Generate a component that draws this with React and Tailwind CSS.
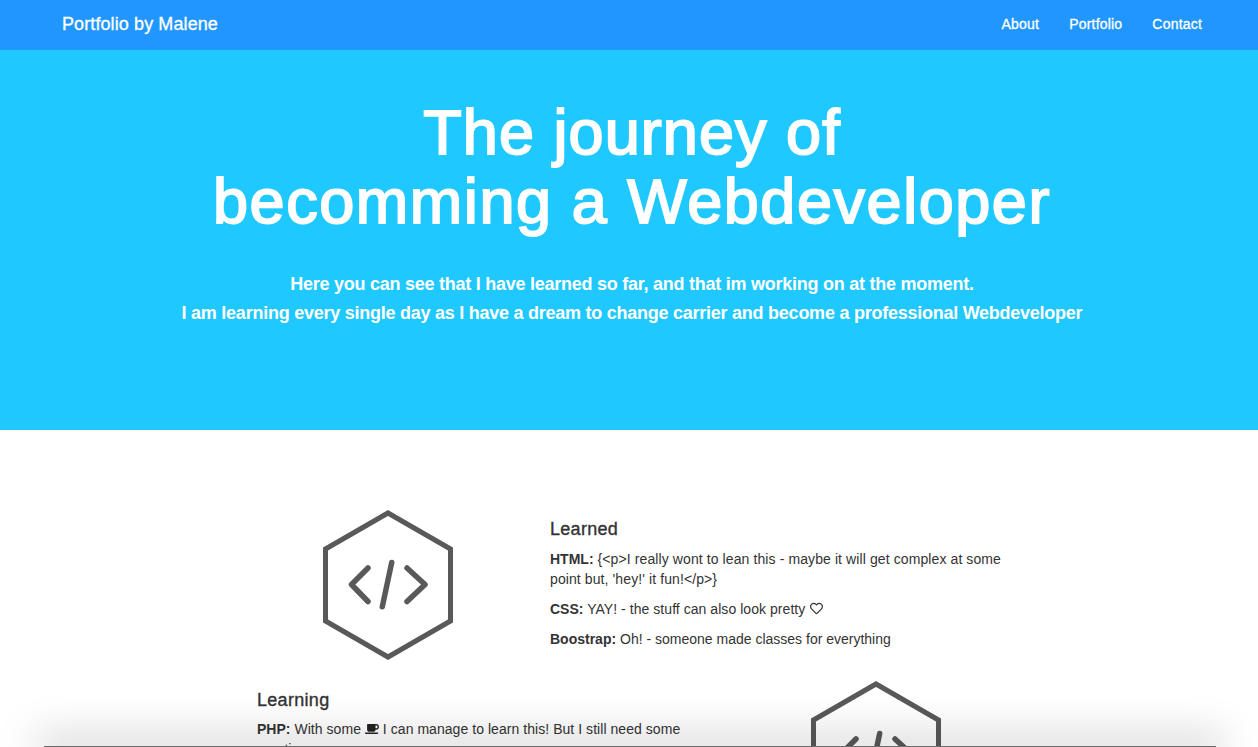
import React from "react";
import { FaCoffee, FaRegHeart } from "react-icons/fa";

function Hex() {
  return (
    <svg width="130" height="150" viewBox="0 0 130 150" fill="none" stroke="#595959" className="block">
      <polygon points="65,3 127.5,39 127.5,111 65,147 2.5,111 2.5,39" strokeWidth="5" strokeLinejoin="miter" />
      <path d="M45 58 L28.5 74.5 L45 91.5 M84 58 L102 74.5 L84 91.5 M68.7 52.5 L59.3 96.7" strokeWidth="5.5" strokeLinecap="round" strokeLinejoin="round" />
    </svg>
  );
}

function Item({ label, children }) {
  return (
    <p className="mb-[10px]">
      <b className="tracking-normal">{label}</b> {children}
    </p>
  );
}

export default function App() {
  return (
    <div className="relative h-[747px] overflow-hidden bg-white text-[14px] leading-[20px] tracking-[0.05px] text-[#333] font-['Liberation_Sans',Arial,sans-serif]">
      <nav className="flex h-[50px] items-center justify-between bg-[#2196ff] pb-[2px] pl-[62px] pr-[56px] text-white [-webkit-text-stroke:0.3px_white]">
        <a className="text-[18px] tracking-[0.1px]">Portfolio by Malene</a>
        <div className="flex gap-[30px] tracking-[0.2px]">
          <a>About</a>
          <a>Portfolio</a>
          <a>Contact</a>
        </div>
      </nav>

      <header className="h-[380px] bg-[#1fc8ff] pl-[6px] pt-[48px] text-center text-white">
        <h1 className="text-[63px] font-medium leading-[69.3px] tracking-[1.55px] [-webkit-text-stroke:1.9px_white]">
          <span className="tracking-[1.05px]">The journey of</span>
          <br />
          becomming a Webdeveloper
        </h1>
        <p className="mt-[33px] text-[18px] font-bold leading-[29px] tracking-[-0.25px]">
          Here you can see that I have learned so far, and that im working on at the moment.
          <br />
          I am learning every single day as I have a dream to change carrier and become a professional Webdeveloper
        </p>
      </header>

      <main className="mx-auto w-[774px] pt-[80px]">
        <section className="mb-[21px] flex">
          <div className="flex w-[292px] shrink-0 justify-center">
            <Hex />
          </div>
          <div className="flex-1 pl-[16px]">
            <h4 className="mb-[10px] mt-[9px] text-[18px] font-medium leading-[20px] tracking-[0.3px] [-webkit-text-stroke:0.35px_#333]">Learned</h4>
            <p className="mb-[10px] tracking-[0.1px]">
              <b className="tracking-normal">HTML:</b> {"{<p>I really wont to lean this - maybe it will get complex at some point but, 'hey!' it fun!</p>}"}
            </p>
            <Item label="CSS:">
              YAY! - the stuff can also look pretty{" "}
              <FaRegHeart className="ml-[1px] inline-block align-[-1px] text-[13px]" />
            </Item>
            <p className="mb-[10px] tracking-normal">
              <b>Boostrap:</b> Oh! - someone made classes for everything
            </p>
          </div>
        </section>

        <section className="flex">
          <div className="flex-1 px-[15px]">
            <h4 className="mb-[9px] mt-[9px] text-[18px] font-medium leading-[20px] tracking-[0.3px] [-webkit-text-stroke:0.35px_#333]">Learning</h4>
            <p className="mb-[10px]">
              <b className="tracking-normal">PHP:</b> With some{" "}
              <FaCoffee className="inline-block align-[-2px] text-[14px] text-[#222]" /> I can manage to learn this! But I still need some practice
            </p>
          </div>
          <div className="flex w-[280px] shrink-0 justify-center">
            <Hex />
          </div>
        </section>
      </main>

      <div className="absolute bottom-0 left-[44px] right-[42px] h-px bg-[#6b6b6b] shadow-[0_0_40px_8px_rgba(0,0,0,0.26)]" />
    </div>
  );
}
